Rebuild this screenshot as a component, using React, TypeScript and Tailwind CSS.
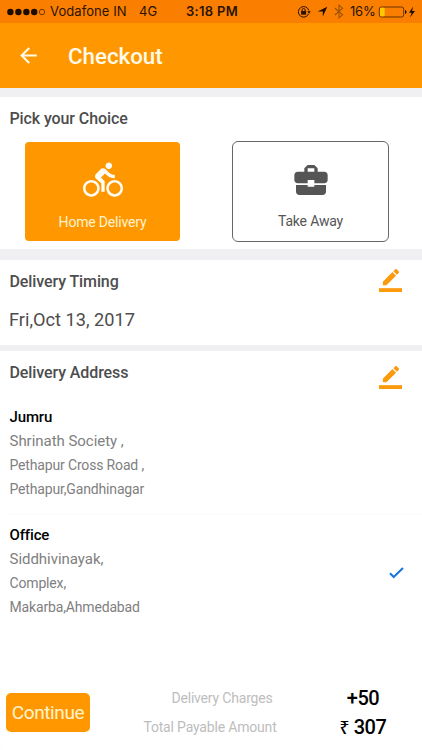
import type { ReactNode } from "react";

function StatusBar() {
  return (
    <div className="flex h-[23px] items-center bg-[#fa7f00] pl-[7px] font-[Inter,sans-serif] text-[13px] leading-[23px] text-[#2b1300]">
      <svg width="38" height="8" viewBox="0 0 38 8" className="shrink-0">
        <g fill="#1c0c00">
          <circle cx="3.4" cy="4" r="3.2" />
          <circle cx="11.4" cy="4" r="3.2" />
          <circle cx="19.4" cy="4" r="3.2" />
          <circle cx="27.2" cy="4" r="3.2" />
        </g>
        <circle cx="35" cy="4" r="2.7" fill="none" stroke="#3c1c00" strokeWidth=".7" />
      </svg>
      <span className="ml-[5px] w-[89px] whitespace-nowrap tracking-[0.07px]">Vodafone IN</span>
      <span className="w-[47px]">4G</span>
      <span className="w-[111px] whitespace-nowrap font-semibold tracking-[0.3px]">3:18 PM</span>
      <svg width="14" height="14" viewBox="0 0 14 14" className="shrink-0" fill="none" stroke="#2b1300">
        <path d="M11.6 8.8A5.3 5.3 0 1 1 11.8 5.5" strokeWidth="1" />
        <path d="M10.2 6.2h3.6L12 8.7z" fill="#2b1300" stroke="none" />
        <rect x="4.1" y="6" width="5" height="3.7" fill="#2b1300" stroke="none" />
        <path d="M5.1 6.2V5a1.5 1.5 0 0 1 3 0v1.2" strokeWidth="1" />
      </svg>
      <svg width="11" height="11" viewBox="0 0 11 11" className="ml-[6px] shrink-0" fill="#1c0c00">
        <path d="M10.3 .7L5.8 10.5V5.6H.7z" />
      </svg>
      <svg width="10" height="15" viewBox="0 0 10 15" className="ml-[6px] shrink-0" fill="none" stroke="#9c5200" strokeWidth="1.1">
        <path d="M.8 4l7.8 6.8L5 13.8V1.2l3.6 3L.8 11" />
      </svg>
      <span className="ml-[6px] w-[28px] tracking-[-0.2px]">16%</span>
      <svg width="38" height="14" viewBox="0 0 38 14" className="shrink-0">
        <rect x="1.3" y="2" width="24.4" height="10" rx="2" fill="none" stroke="#6b3500" strokeWidth="1" />
        <rect x="2" y="2.8" width="4.7" height="8.4" rx=".8" fill="#ffc800" />
        <path d="M27 5c2 .4 2 3.600 0 4z" fill="#2b1300" />
        <path d="M35.200 1.500L31 7.800h2.700L32 12.500l5-6.600h-2.900z" fill="#1c0c00" />
      </svg>
    </div>
  );
}

function EditIcon() {
  return (
    <svg width="23" height="23" viewBox="0 0 24 24" fill="#fc990c">
      <path d="M17.750 7L14 3.250l-10 10V17h3.750l10-10zm2.960-2.960c.39-.39.39-1.020 0-1.410L18.370.29c-.39-.39-1.020-.39-1.410 0L15 2.250 18.750 6l1.960-1.960z" />
      <path d="M0 20h24v4H0z" />
    </svg>
  );
}

function Heading({ children }: { children: ReactNode }) {
  return <h2 className="pl-[0.5px] text-[16px] font-medium leading-[20px] tracking-[-0.1px] text-[#4d4d4d]">{children}</h2>;
}

function Address({ name, lines }: { name: string; lines: string[] }) {
  return (
    <div className="pl-[0.5px] text-[#808080]">
      <h3 className="text-[15px] font-medium leading-[24px] tracking-[-0.15px] text-black">{name}</h3>
      <p className="text-[15px] leading-[24px] tracking-[-0.03px]">{lines[0]}</p>
      <p className="text-[14px] leading-[24px] tracking-[-0.16px]">{lines[1]}</p>
      <p className="text-[14px] leading-[24px] tracking-[-0.16px]">{lines[2]}</p>
    </div>
  );
}

export default function App() {
  return (
    <div className="flex h-[750px] w-[422px] flex-col overflow-hidden bg-white font-[Roboto,sans-serif]">
      <StatusBar />
      <header className="flex h-[65px] shrink-0 items-center bg-[#ff9800] pl-[16px] text-[#fffbe8]">
        <svg width="25" height="25" viewBox="0 0 24 24" fill="currentColor">
          <path d="M20 11H7.830l5.590-5.590L12 4l-8 8 8 8 1.410-1.410L7.830 13H20v-2z" />
        </svg>
        <h1 className="ml-[27px] pt-[3px] text-[22.300px] font-medium">Checkout</h1>
      </header>

      <div className="flex flex-1 flex-col">
        <section className="box-border h-[172px] border-b-[11px] border-t-[9px] border-[#f0f0f2] px-[9px] pt-[12px]">
          <Heading>Pick your Choice</Heading>
          <div className="mt-[12px] flex justify-between pl-[16px] pr-[24px]">
            <button className="mt-[1px] flex h-[99px] w-[155px] flex-col items-center rounded-[4px] bg-[#ff9800] pt-[18px] text-white">
              <svg width="40" height="40" viewBox="0 0 24 24" fill="#fffdf5">
                <path d="M15.500 5.500c1.100 0 2-.9 2-2s-.9-2-2-2-2 .9-2 2 .9 2 2 2zM5 12c-2.800 0-5 2.200-5 5s2.200 5 5 5 5-2.200 5-5-2.200-5-5-5zm0 8.500c-1.900 0-3.500-1.600-3.500-3.500s1.600-3.500 3.500-3.500 3.500 1.600 3.500 3.500-1.600 3.500-3.500 3.500zm5.800-10l2.400-2.400.8.8c1.300 1.300 3 2.100 5.100 2.100V9c-1.500 0-2.700-.6-3.600-1.500l-1.900-1.900c-.5-.4-1-.6-1.600-.6s-1.100.2-1.400.6L7.800 8.400c-.4.4-.6.9-.6 1.400 0 .6.2 1.100.6 1.400L11 14v5h2v-6.200l-2.200-2.300zM19 12c-2.800 0-5 2.200-5 5s2.200 5 5 5 5-2.200 5-5-2.200-5-5-5zm0 8.500c-1.900 0-3.500-1.600-3.500-3.500s1.600-3.500 3.500-3.500 3.500 1.600 3.500 3.500-1.600 3.500-3.500 3.500z" />
              </svg>
              <span className="mt-[12px] text-[14px] leading-[20px] tracking-[-0.18px] text-[#fff3cf]">Home Delivery</span>
            </button>
            <button className="flex h-[101px] w-[157px] flex-col items-center rounded-[6px] border border-[#666] bg-white pt-[18px] text-[#555]">
              <svg width="40" height="40" viewBox="0 0 24 24" fill="currentColor">
                <path d="M10 16v-1H3.010L3 19c0 1.110.89 2 2 2h14c1.110 0 2-.89 2-2v-4h-7v1h-4zm10-9h-4.010V5l-2-2h-4l-2 2v2H4c-1.100 0-2 .9-2 2v3c0 1.110.89 2 2 2h6v-2h4v2h6c1.100 0 2-.9 2-2V9c0-1.100-.9-2-2-2zm-6 0h-4V5h4v2z" />
              </svg>
              <span className="mt-[11px] text-[14px] leading-[20px] tracking-[-0.18px]">Take Away</span>
            </button>
          </div>
        </section>

        <section className="flex h-[91px] justify-between border-b-[6px] border-[#f0f0f2] pl-[9px] pr-[20px]">
          <div className="pt-[12px]">
            <Heading>Delivery Timing</Heading>
            <p className="mt-[16px] text-[18.200px] leading-[24px] text-[#4d4d4d]">Fri,Oct 13, 2017</p>
          </div>
          <div className="pt-[9px]"><EditIcon /></div>
        </section>

        <section className="pl-[9px]">
          <div className="flex justify-between pr-[20px]">
            <div className="pt-[12px]"><Heading>Delivery Address</Heading></div>
            <div className="pt-[15px]"><EditIcon /></div>
          </div>
          <div className="mt-[16px] h-[110px] border-b border-[#fbfbfb]">
            <Address name="Jumru" lines={["Shrinath Society ,", "Pethapur Cross Road ,", "Pethapur,Gandhinagar"]} />
          </div>
          <div className="mt-[8px] flex items-center justify-between pr-[18px]">
            <Address name="Office" lines={["Siddhivinayak,", "Complex,", "Makarba,Ahmedabad"]} />
            <svg width="15" height="12" viewBox="0 0 15 12" fill="none" stroke="#1976e0" strokeWidth="2.100" className="mt-[4px]">
              <path d="M1 6.200L4.700 10 14 1" />
            </svg>
          </div>
        </section>
      </div>

      <footer className="flex h-[79px] shrink-0 items-center rounded-[5px] pl-[6px] shadow-[0_0_2px_rgba(0,0,0,0.03)]">
        <button className="mt-[3px] h-[39px] w-[84px] rounded-[5px] bg-[#ff9800] pt-[2px] text-[19px] tracking-[-0.4px] text-[#fff3cf]">Continue</button>
        <div className="ml-[38px] mt-[4px] w-[164px] text-center text-[14px] leading-[29px] tracking-[-0.18px] text-[#bdbdbd]">
          <p className="pl-[24px]">Delivery Charges</p>
          <p>Total Payable Amount</p>
        </div>
        <div className="ml-[12px] mt-[5px] w-[118px] text-center text-[20px] font-medium leading-[29px] tracking-[-0.4px] text-black">
          <p>+50</p>
          <p><span className="font-['Noto_Sans',sans-serif] text-[17.500px] leading-none">₹</span> 307</p>
        </div>
      </footer>
    </div>
  );
}
